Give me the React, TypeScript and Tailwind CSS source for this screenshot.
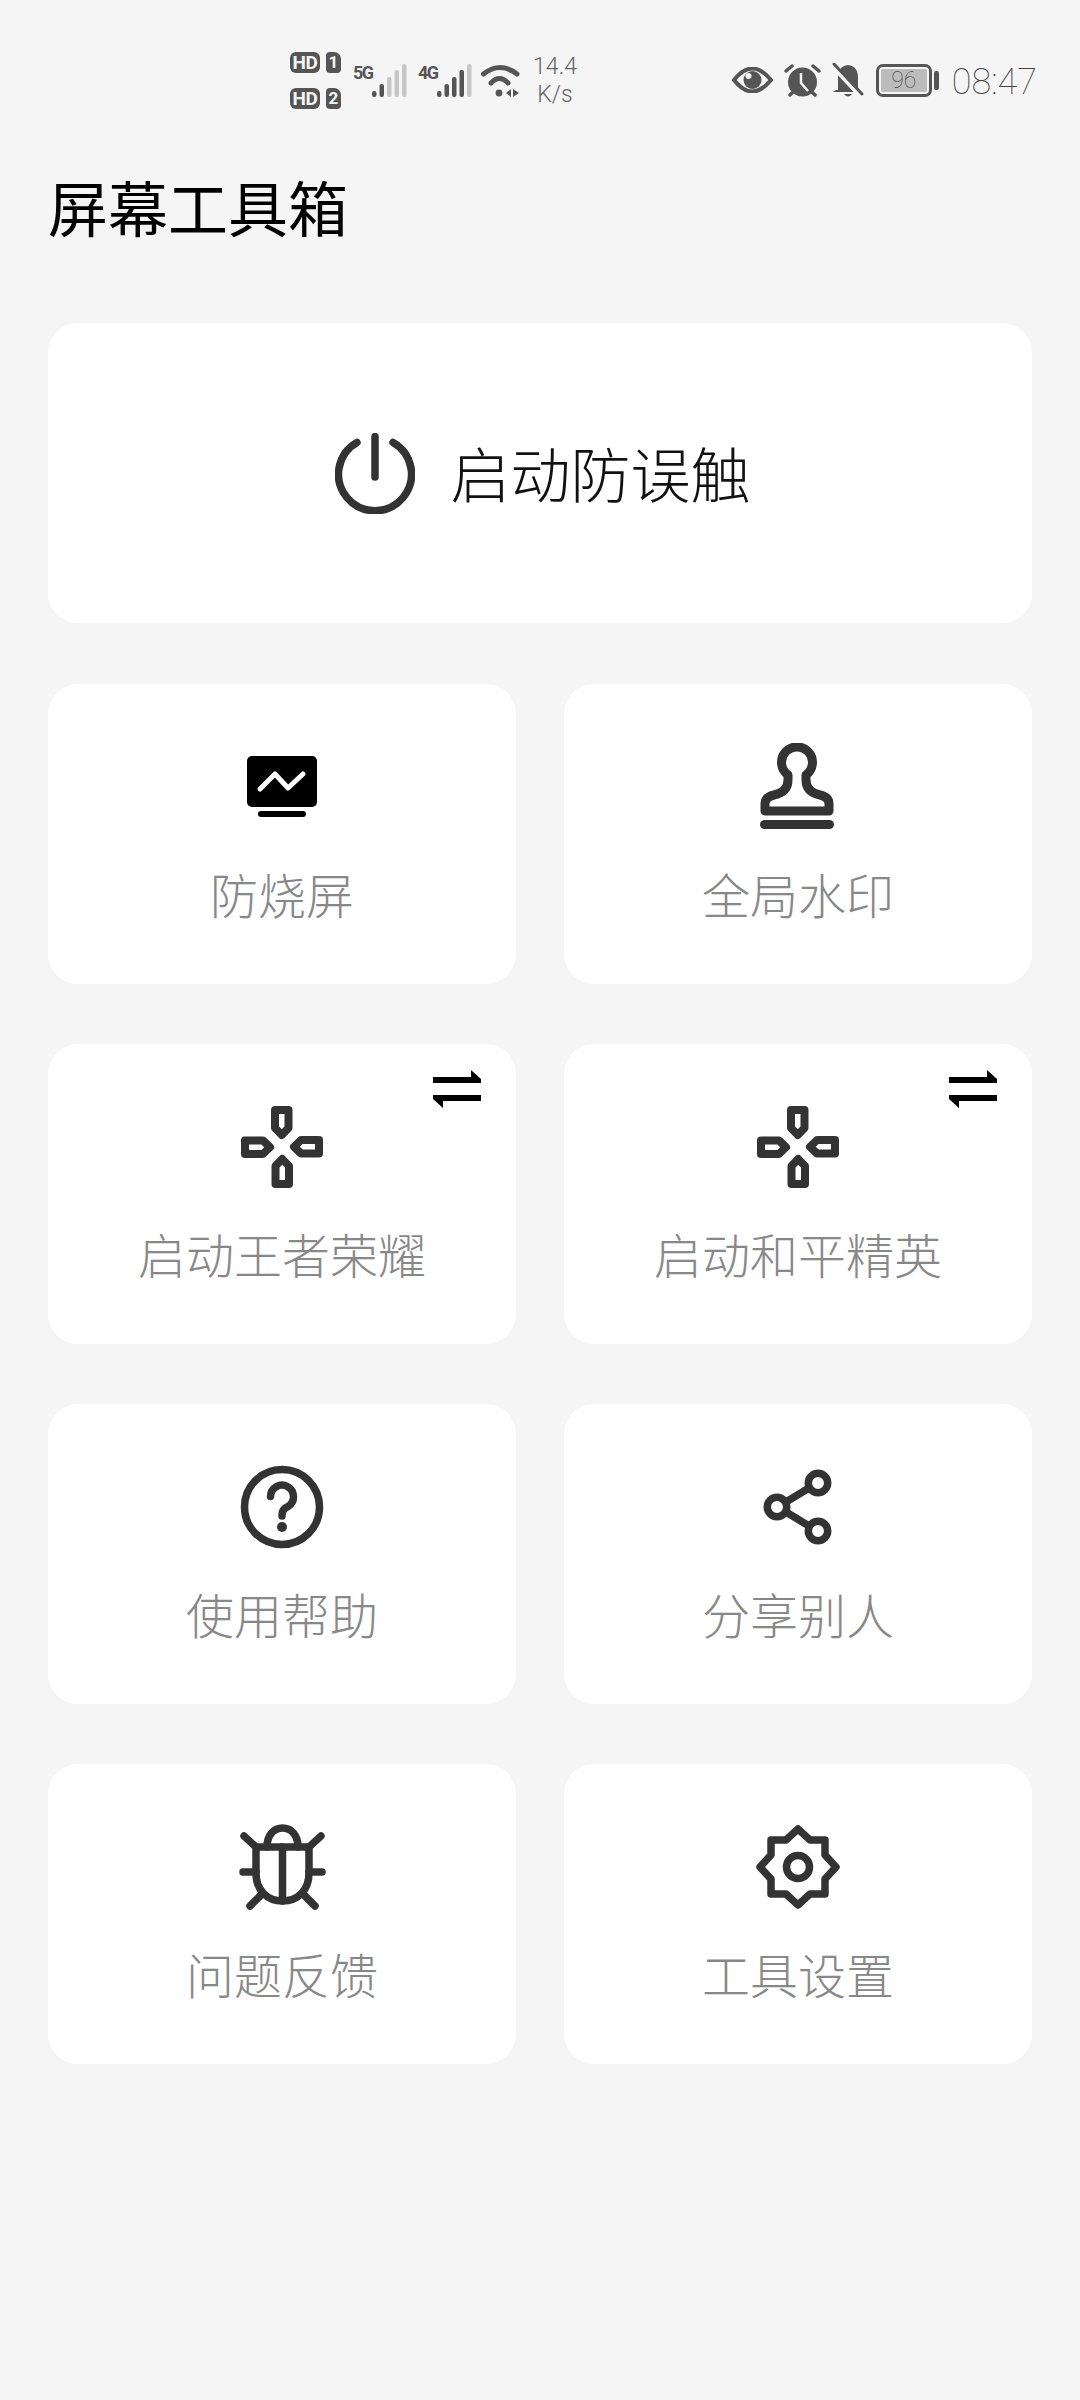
import type { ReactNode } from "react"

const DARK = "#333333"

function Signal({ on }: { on: number }) {
    const bars = [
        { x: 1, y: 27 },
        { x: 8.5, y: 20 },
        { x: 16, y: 13 },
        { x: 23.5, y: 6 },
        { x: 31, y: 0 },
    ]
    return (
        <svg width="36" height="33" viewBox="0 0 36 33">
            {bars.map((b, i) => (
                <rect key={i} x={b.x} y={b.y} width="4.5" height={33 - b.y} rx="2" fill={i < on ? "#555555" : "#c6c6c6"} />
            ))}
        </svg>
    )
}

function HdRow({ n }: { n: string }) {
    return (
        <div className="flex items-center gap-[6px]">
            <span className="flex h-[21px] w-[30px] items-center justify-center rounded-[6px] bg-[#555555] font-['Roboto',sans-serif] text-[19px] font-bold leading-none tracking-[-0.5px] text-[#f5f5f5]">HD</span>
            <span className="flex h-[21px] w-[15px] items-center justify-center rounded-[4px] rounded-tr-[7px] bg-[#555555] font-['Roboto',sans-serif] text-[17px] font-bold leading-none text-[#f5f5f5]">{n}</span>
        </div>
    )
}

function NetTag({ text }: { text: string }) {
    return <span className="h-[33px] w-[18px] font-['Roboto',sans-serif] text-[18px] font-bold leading-[17px] tracking-[-1.5px] text-[#555555]">{text}</span>
}

function StatusBar() {
    return (
        <div className="flex h-[120px] items-center pl-[290px] pr-[43px] pt-[40px]">
            <div className="flex flex-col gap-[15px]">
                <HdRow n="1" />
                <HdRow n="2" />
            </div>
            <div className="ml-[12px] flex">
                <NetTag text="5G" />
                <Signal on={2} />
            </div>
            <div className="ml-[11px] flex">
                <NetTag text="4G" />
                <Signal on={4} />
            </div>
            <svg className="ml-[9px]" width="39" height="33" viewBox="0 0 39 33" fill="none" stroke="#555555" strokeWidth="5" strokeLinecap="round">
                <path d="M2.5 10 Q19 -3 36 10" />
                <path d="M10 19 Q18.5 10 27 19" />
                <circle cx="18" cy="29" r="3.4" fill="#555555" stroke="none" />
                <path d="M30 25 L25 29 L30 33 Z M32 25 L38 29 L32 33 Z" fill="#555555" stroke="none" />
            </svg>
            <div className="ml-[11px] mt-[2px] flex w-[48px] flex-col items-center font-['Roboto',sans-serif] text-[23px] font-light leading-[28px] text-[#666666]">
                <span>14.4</span>
                <span>K/s</span>
            </div>
            <div className="ml-auto flex items-center">
                <svg width="41" height="26" viewBox="0 0 41 26" fill="none">
                    <path d="M2 13 Q20 -10 39 13 Q20 36 2 13 Z" stroke="#555555" strokeWidth="4" strokeLinejoin="round" />
                    <circle cx="20.5" cy="13" r="9" fill="#555555" />
                    <circle cx="16.5" cy="9" r="3" fill="#f5f5f5" />
                </svg>
                <svg className="ml-[11px]" width="37" height="33" viewBox="0 0 37 33" fill="none">
                    <circle cx="18.5" cy="18" r="14.5" fill="#555555" />
                    <path d="M17 9 V19 L24 27" stroke="#f5f5f5" strokeWidth="2.5" />
                    <path d="M2 7 L8 2 M35 7 L29 2 M6 31 L9 28 M31 31 L28 28" stroke="#555555" strokeWidth="3.5" strokeLinecap="round" />
                </svg>
                <svg className="ml-[10px]" width="33" height="34" viewBox="0 0 33 34" fill="none">
                    <path d="M7 27 V15 Q7 3 17 2 Q27 3 27 15 V27 L30 29 H2 L5 27 Z" fill="#555555" />
                    <path d="M13 31 H21 Q17 36 13 31 Z" fill="#555555" />
                    <path d="M1 3 L29 33" stroke="#f5f5f5" strokeWidth="4" />
                    <path d="M3 1 L31 31" stroke="#555555" strokeWidth="3" strokeLinecap="round" />
                </svg>
                <div className="ml-[12px] flex items-center gap-[2px]">
                    <div className="flex h-[33px] w-[56px] items-center justify-center rounded-[7px] border-[3.5px] border-[#555555] p-[2px]">
                        <div className="flex h-full w-full items-center justify-center rounded-[2px] bg-[#bcbcbc] font-['Roboto',sans-serif] text-[23px] font-thin leading-none text-[#444444]">96</div>
                    </div>
                    <div className="h-[19px] w-[5px] rounded-[2px] bg-[#555555]" />
                </div>
                <span className="ml-[13px] mt-[3px] font-['Roboto',sans-serif] text-[36px] font-thin leading-none text-[#444444]">08:47</span>
            </div>
        </div>
    )
}

function PowerIcon() {
    return (
        <svg className="mt-[4px]" width="80" height="81" viewBox="0 0 80 81" fill="none" stroke={DARK} strokeWidth="7.5" strokeLinecap="round">
            <path d="M22 9.5 A36.5 36.5 0 1 0 58 9.5" />
            <path d="M40 3.5 V44" />
        </svg>
    )
}

function Icon({ children }: { children: ReactNode }) {
    return (
        <svg width="88" height="88" viewBox="0 0 88 88" fill="none" stroke={DARK} strokeWidth="7.5" strokeLinecap="round" strokeLinejoin="round">
            {children}
        </svg>
    )
}

const MonitorIcon = (
    <Icon>
        <rect x="9" y="13" width="70" height="51" rx="5" fill="#000000" stroke="none" />
        <rect x="20" y="68" width="48" height="6" rx="3" fill="#000000" stroke="none" />
        <path d="M22 46 L37 31 L50 45 L65 31" stroke="#ffffff" strokeWidth="5" />
    </Icon>
)

const StampIcon = (
    <Icon>
        <path d="M11 68 H75 V61 Q75 54 66 52 Q52 49 52 37 V32 A15.5 15.5 0 1 0 34 32 V37 Q34 49 20 52 Q11 54 11 61 Z" strokeWidth="9" />
        <rect x="6" y="77" width="74" height="9" rx="4.5" fill={DARK} stroke="none" />
    </Icon>
)

const armPath = "M37 7 H50.5 V25 L43.8 32 L37 25 Z"
const PadIcon = (
    <Icon>
        <path d={armPath} strokeWidth="8" />
        <path d={armPath} strokeWidth="8" transform="rotate(90 44 44)" />
        <path d={armPath} strokeWidth="8" transform="rotate(180 44 44)" />
        <path d={armPath} strokeWidth="8" transform="rotate(270 44 44)" />
    </Icon>
)

const HelpIcon = (
    <Icon>
        <circle cx="44" cy="44" r="37.5" />
        <path d="M32.5 33.5 A11.5 11.5 0 1 1 50 43.5 Q44 46 44 52 V53" />
        <circle cx="44" cy="64" r="5" fill={DARK} stroke="none" />
    </Icon>
)

const ShareIcon = (
    <Icon>
        <circle cx="64" cy="20" r="9.7" />
        <circle cx="23" cy="44" r="9.7" />
        <circle cx="64" cy="68" r="9.7" />
        <path d="M32 39 L55 25 M32 49 L55 63" strokeLinecap="butt" />
    </Icon>
)

const BugIcon = (
    <Icon>
        <path d="M18 24 H71 V50 C71 67 60 78 44.5 78 C29 78 18 67 18 50 Z" />
        <path d="M29 24 C29 12 36 5 44.5 5 C53 5 60 12 60 24" />
        <path d="M44.5 24 V78" />
        <path d="M6 13 L18 24 M83 13 L71 24 M5 49 H18 M84 49 H71 M12 83 L24 71 M77 83 L65 71" />
    </Icon>
)

const GearIcon = (
    <Icon>
        <path d="M44 6 L56 17 H71 V32 L82 44 L71 56 V71 H56 L44 82 L32 71 H17 V56 L6 44 L17 32 V17 H32 Z" />
        <circle cx="44" cy="44" r="11.5" />
    </Icon>
)

function SwapBadge() {
    return (
        <svg className="absolute right-[35px] top-[26px]" width="48" height="38" viewBox="0 0 48 38" fill="#000000">
            <path d="M0 7 H38 V0 L48 9 V13 H0 Z" />
            <path d="M48 25 H0 V29 L10 38 V31 H48 Z" />
        </svg>
    )
}

function ToolCard({ icon, label, swap }: { icon: ReactNode; label: string; swap?: boolean }) {
    return (
        <div className="relative flex h-[300px] flex-col items-center rounded-[30px] bg-white pt-[59px]">
            {swap && <SwapBadge />}
            {icon}
            <span className="mt-[30px] text-[48px] font-light leading-[64px] text-[#888888]">{label}</span>
        </div>
    )
}

export default function App() {
    return (
        <div className="min-h-[2400px] w-[1080px] bg-[#f5f5f5] font-['Noto_Sans_CJK_SC','Noto_Sans',sans-serif]">
            <StatusBar />
            <main className="px-[48px]">
                <h1 className="mt-[46px] text-[60px] font-normal leading-[80px] text-black">屏幕工具箱</h1>
                <div className="mt-[77px] flex h-[300px] items-center justify-center gap-[36px] rounded-[30px] bg-white pb-[3px] pl-[5px]">
                    <PowerIcon />
                    <span className="text-[60px] font-light leading-[80px] text-[#111111]">启动防误触</span>
                </div>
                <div className="mt-[61px] grid grid-cols-2 gap-x-[48px] gap-y-[60px]">
                    <ToolCard icon={MonitorIcon} label="防烧屏" />
                    <ToolCard icon={StampIcon} label="全局水印" />
                    <ToolCard icon={PadIcon} label="启动王者荣耀" swap />
                    <ToolCard icon={PadIcon} label="启动和平精英" swap />
                    <ToolCard icon={HelpIcon} label="使用帮助" />
                    <ToolCard icon={ShareIcon} label="分享别人" />
                    <ToolCard icon={BugIcon} label="问题反馈" />
                    <ToolCard icon={GearIcon} label="工具设置" />
                </div>
            </main>
        </div>
    )
}
